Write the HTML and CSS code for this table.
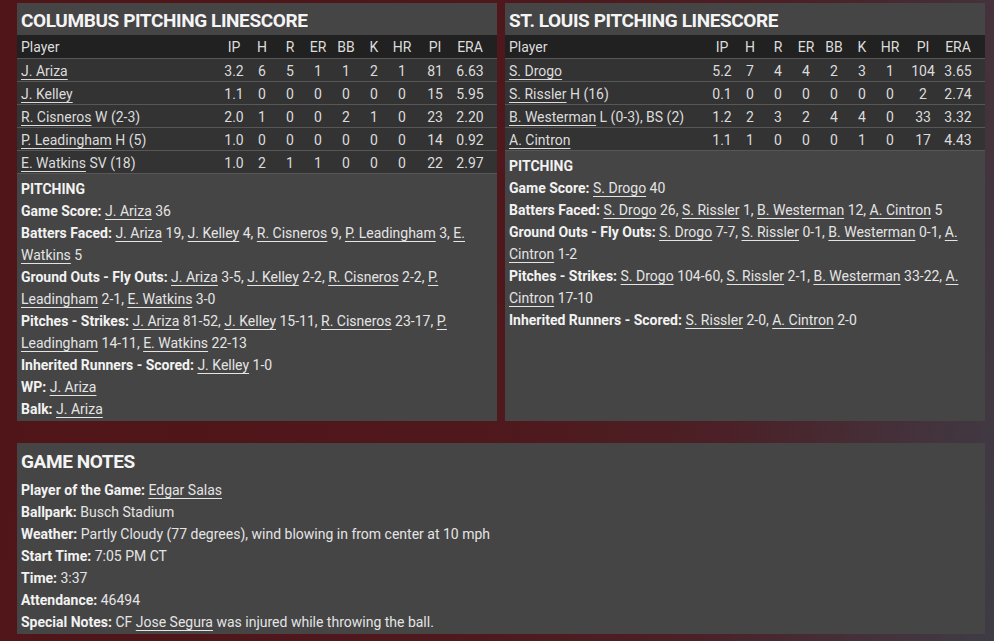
FILE: index.html
```html
<!DOCTYPE html>
<html>
<head>
<meta charset="utf-8">
<link rel="stylesheet" href="styles.css">
</head>
<body>
<div class="page">
  <div class="top">
    <section class="panel">
      <h2 class="title">COLUMBUS PITCHING LINESCORE</h2>
      <table class="ls">
        <colgroup><col class="c-player"><col class="c-n"><col class="c-n"><col class="c-n"><col class="c-n"><col class="c-n"><col class="c-n"><col class="c-n"><col class="c-pi"><col class="c-era"></colgroup>
        <thead><tr><th class="pl">Player</th><th>IP</th><th>H</th><th>R</th><th>ER</th><th>BB</th><th>K</th><th>HR</th><th>PI</th><th class="era">ERA</th></tr></thead>
        <tbody>
          <tr><td class="pl"><a>J. Ariza</a></td><td>3.2</td><td>6</td><td>5</td><td>1</td><td>1</td><td>2</td><td>1</td><td>81</td><td class="era">6.63</td></tr>
          <tr><td class="pl"><a>J. Kelley</a></td><td>1.1</td><td>0</td><td>0</td><td>0</td><td>0</td><td>0</td><td>0</td><td>15</td><td class="era">5.95</td></tr>
          <tr><td class="pl"><a>R. Cisneros</a> W (2-3)</td><td>2.0</td><td>1</td><td>0</td><td>0</td><td>2</td><td>1</td><td>0</td><td>23</td><td class="era">2.20</td></tr>
          <tr><td class="pl"><a>P. Leadingham</a> H (5)</td><td>1.0</td><td>0</td><td>0</td><td>0</td><td>0</td><td>0</td><td>0</td><td>14</td><td class="era">0.92</td></tr>
          <tr><td class="pl"><a>E. Watkins</a> SV (18)</td><td>1.0</td><td>2</td><td>1</td><td>1</td><td>0</td><td>0</td><td>0</td><td>22</td><td class="era">2.97</td></tr>
        </tbody>
      </table>
      <div class="notes">
        <p><b>PITCHING</b></p>
        <p><b>Game Score:</b> <a>J. Ariza</a> 36</p>
        <p><b>Batters Faced:</b> <a>J. Ariza</a> 19, <a>J. Kelley</a> 4, <a>R. Cisneros</a> 9, <a>P. Leadingham</a> 3, <a>E. Watkins</a> 5</p>
        <p><b>Ground Outs - Fly Outs:</b> <a>J. Ariza</a> 3-5, <a>J. Kelley</a> 2-2, <a>R. Cisneros</a> 2-2, <a>P. Leadingham</a> 2-1, <a>E. Watkins</a> 3-0</p>
        <p><b>Pitches - Strikes:</b> <a>J. Ariza</a> 81-52, <a>J. Kelley</a> 15-11, <a>R. Cisneros</a> 23-17, <a>P. Leadingham</a> 14-11, <a>E. Watkins</a> 22-13</p>
        <p><b>Inherited Runners - Scored:</b> <a>J. Kelley</a> 1-0</p>
        <p><b>WP:</b> <a>J. Ariza</a></p>
        <p><b>Balk:</b> <a>J. Ariza</a></p>
      </div>
    </section>
    <section class="panel">
      <h2 class="title">ST. LOUIS PITCHING LINESCORE</h2>
      <table class="ls">
        <colgroup><col class="c-player"><col class="c-n"><col class="c-n"><col class="c-n"><col class="c-n"><col class="c-n"><col class="c-n"><col class="c-n"><col class="c-pi"><col class="c-era"></colgroup>
        <thead><tr><th class="pl">Player</th><th>IP</th><th>H</th><th>R</th><th>ER</th><th>BB</th><th>K</th><th>HR</th><th>PI</th><th class="era">ERA</th></tr></thead>
        <tbody>
          <tr><td class="pl"><a>S. Drogo</a></td><td>5.2</td><td>7</td><td>4</td><td>4</td><td>2</td><td>3</td><td>1</td><td>104</td><td class="era">3.65</td></tr>
          <tr><td class="pl"><a>S. Rissler</a> H (16)</td><td>0.1</td><td>0</td><td>0</td><td>0</td><td>0</td><td>0</td><td>0</td><td>2</td><td class="era">2.74</td></tr>
          <tr><td class="pl"><a>B. Westerman</a> L (0-3), BS (2)</td><td>1.2</td><td>2</td><td>3</td><td>2</td><td>4</td><td>4</td><td>0</td><td>33</td><td class="era">3.32</td></tr>
          <tr><td class="pl"><a>A. Cintron</a></td><td>1.1</td><td>1</td><td>0</td><td>0</td><td>0</td><td>1</td><td>0</td><td>17</td><td class="era">4.43</td></tr>
        </tbody>
      </table>
      <div class="notes">
        <p><b>PITCHING</b></p>
        <p><b>Game Score:</b> <a>S. Drogo</a> 40</p>
        <p><b>Batters Faced:</b> <a>S. Drogo</a> 26, <a>S. Rissler</a> 1, <a>B. Westerman</a> 12, <a>A. Cintron</a> 5</p>
        <p><b>Ground Outs - Fly Outs:</b> <a>S. Drogo</a> 7-7, <a>S. Rissler</a> 0-1, <a>B. Westerman</a> 0-1, <a>A. Cintron</a> 1-2</p>
        <p><b>Pitches - Strikes:</b> <a>S. Drogo</a> 104-60, <a>S. Rissler</a> 2-1, <a>B. Westerman</a> 33-22, <a>A. Cintron</a> 17-10</p>
        <p><b>Inherited Runners - Scored:</b> <a>S. Rissler</a> 2-0, <a>A. Cintron</a> 2-0</p>
      </div>
    </section>
  </div>
  <section class="panel game">
    <h2 class="title game-title">GAME NOTES</h2>
    <div class="notes">
      <p><b>Player of the Game:</b> <a>Edgar Salas</a></p>
      <p><b>Ballpark:</b> Busch Stadium</p>
      <p><b>Weather:</b> Partly Cloudy (77 degrees), wind blowing in from center at 10 mph</p>
      <p><b>Start Time:</b> 7:05 PM CT</p>
      <p><b>Time:</b> 3:37</p>
      <p><b>Attendance:</b> 46494</p>
      <p><b>Special Notes:</b> CF <a>Jose Segura</a> was injured while throwing the ball.</p>
    </div>
  </section>
</div>
</body>
</html>
```

FILE: styles.css
```css
html, body {
  margin: 0;
  padding: 0;
  height: 100%;
}
body {
  background: linear-gradient(100deg, #501519 0%, #4f181c 50%, #4b2026 72%, #44323c 90%, #3e3c46 100%);
  font-family: Roboto, "Noto Sans", sans-serif;
  font-size: 14px;
  color: #e4e4e4;
  overflow: hidden;
}
.page {
  padding: 3px 9px 0 17px;
}
.top {
  display: grid;
  grid-template-columns: 480px 480px;
  column-gap: 8px;
}
.panel {
  background: #454545;
}
.title {
  margin: 0;
  height: 32px;
  box-sizing: border-box;
  padding: 2px 0 0 4px;
  line-height: 32px;
  font-size: 19px;
  letter-spacing: -0.4px;
  font-weight: 700;
  color: #f4f4f4;
}
.ls {
  width: 100%;
  border-collapse: collapse;
  table-layout: fixed;
}
.c-n { width: 28px; }
.c-pi { width: 38px; }
.c-era { width: 43px; }
.ls th, .ls td {
  height: 23px;
  box-sizing: border-box;
  padding: 2px 0 0 0;
  text-align: center;
  font-weight: 400;
  white-space: nowrap;
  color: #dcdcdc;
  border-bottom: 1px solid #575757;
}
.ls th {
  background: #212121;
}
.ls td {
  background: #333333;
}
.ls .pl {
  text-align: left;
  padding-left: 4px;
}
.ls .era { padding-right: 11px; }
a {
  color: inherit;
  text-decoration: underline;
  text-underline-offset: 3px;
}
.notes {
  padding: 4px 4px 0 4px;
}
.notes p {
  margin: 0;
  line-height: 22px;
}
.notes b {
  font-weight: 700;
  color: #f2f2f2;
}
.top .panel {
  padding-bottom: 1px;
}
.game {
  margin-top: 22px;
  width: 968px;
  height: 191px;
}
.game-title {
  height: 36px;
  padding-top: 3px;
}
.game .notes {
  padding-top: 0;
  padding-bottom: 0;
}
```
